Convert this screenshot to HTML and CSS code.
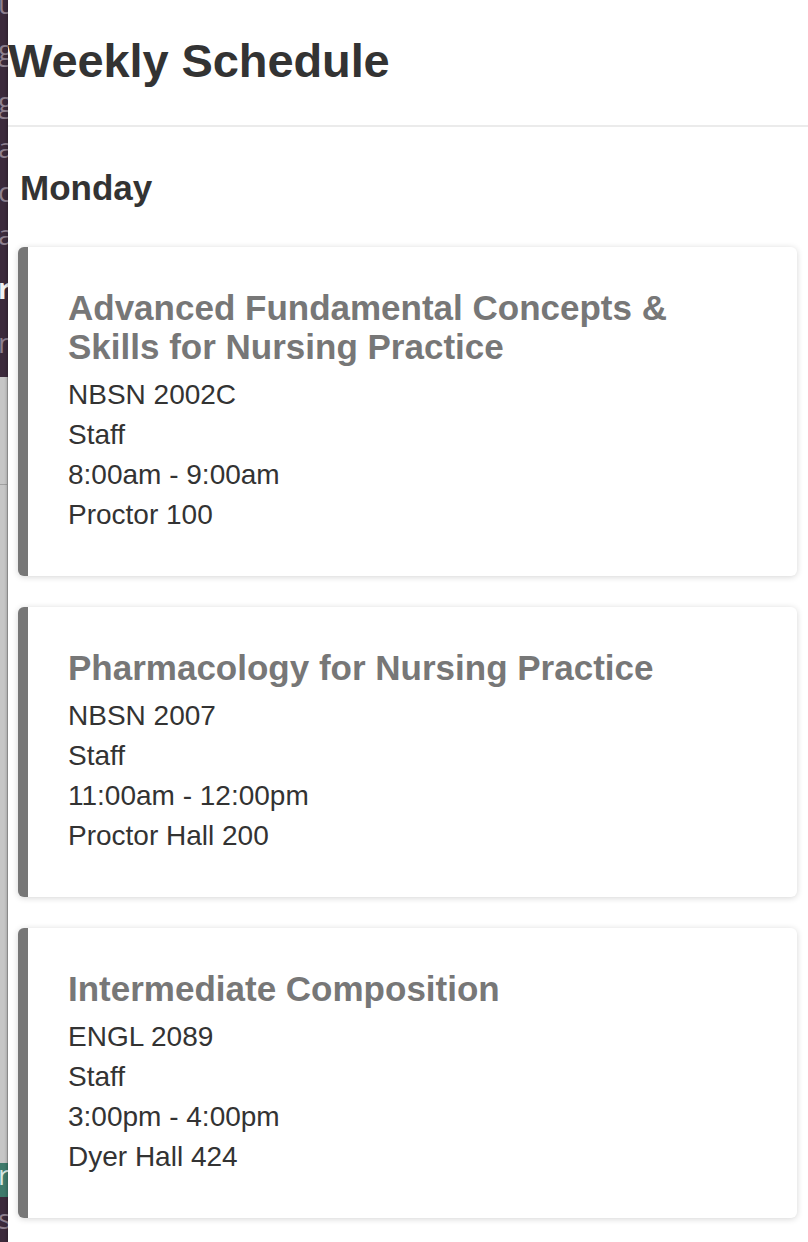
FILE: index.html
```html
<!DOCTYPE html>
<html lang="en">
<head>
<meta charset="utf-8">
<title>Weekly Schedule</title>
<link rel="stylesheet" href="styles.css">
</head>
<body>
<div class="app">
  <aside class="rail">
    <div class="rail-top">
      <span class="ch ch-u">u</span>
      <span class="ch ch-g1">g:</span>
      <span class="ch ch-g2">g</span>
      <span class="ch ch-a1">a</span>
      <span class="ch ch-c">c</span>
      <span class="ch ch-a2">a</span>
      <span class="ch ch-r strong">r</span>
      <span class="ch ch-n">n</span>
    </div>
    <div class="rail-gray">
      <div class="rail-gray-top"></div>
      <div class="rail-gray-bottom"></div>
    </div>
    <div class="rail-teal"><span class="ch">r</span></div>
    <div class="rail-bottom"><span class="ch">s</span></div>
  </aside>

  <main class="page">
    <header class="page-header">
      <h1>Weekly Schedule</h1>
    </header>

    <section class="day">
      <h2 class="day-title">Monday</h2>

      <article class="course">
        <h3 class="course-title">Advanced Fundamental Concepts &amp; Skills for Nursing Practice</h3>
        <div class="course-line">NBSN 2002C</div>
        <div class="course-line">Staff</div>
        <div class="course-line">8:00am - 9:00am</div>
        <div class="course-line">Proctor 100</div>
      </article>

      <article class="course">
        <h3 class="course-title">Pharmacology for Nursing Practice</h3>
        <div class="course-line">NBSN 2007</div>
        <div class="course-line">Staff</div>
        <div class="course-line">11:00am - 12:00pm</div>
        <div class="course-line">Proctor Hall 200</div>
      </article>

      <article class="course">
        <h3 class="course-title">Intermediate Composition</h3>
        <div class="course-line">ENGL 2089</div>
        <div class="course-line">Staff</div>
        <div class="course-line">3:00pm - 4:00pm</div>
        <div class="course-line">Dyer Hall 424</div>
      </article>
    </section>
  </main>
</div>
</body>
</html>
```

FILE: styles.css
```css
html, body {
  margin: 0;
  padding: 0;
  background: #fff;
}

body {
  font-family: "Liberation Sans", Arial, Helvetica, sans-serif;
  color: #333;
}

.app {
  display: flex;
  min-height: 1242px;
}

/* left rail: the page behind this panel */
.rail {
  flex: none;
  width: 8px;
  overflow: hidden;
  background: #3b2a3b;
  display: flex;
  flex-direction: column;
}

.rail-top {
  height: 377px;
  display: flex;
  flex-direction: column;
}

.ch {
  display: block;
  font-family: "Open Sans", "Liberation Sans", sans-serif;
  font-size: 28px;
  line-height: 30px;
  color: #8e808e;
  white-space: nowrap;
  margin-left: -2px;
}

.ch-u { margin-top: -12px; }
.ch-g1 { margin-top: 16px; }
.ch-g2 { margin-top: 22px; }
.ch-a1 { margin-top: 16px; }
.ch-c { margin-top: 14px; }
.ch-a2 { margin-top: 13px; }
.ch-r { margin-top: 24px; }
.ch-n { margin-top: 24px; }

.strong {
  color: #f2f2f2;
  font-weight: 700;
}

.rail-gray {
  height: 786px;
  display: flex;
  flex-direction: column;
  background: #c6c6c6;
  border-right: 1px solid #a3a3a3;
}

.rail-gray-top {
  height: 107px;
  border-bottom: 1px solid #a0a0a0;
}

.rail-gray-bottom {
  flex: 1;
}

.rail-teal {
  height: 34px;
  background: #3e7a6b;
}

.rail-teal .ch {
  color: #d8e6e1;
  margin-top: -4px;
}

.rail-bottom {
  flex: 1;
  background: #3b2a3b;
}

.rail-bottom .ch {
  margin-top: 6px;
}

/* main panel */
.page {
  flex: 1;
  min-width: 0;
  background: #fff;
  box-shadow: -1px 0 3px rgba(0, 0, 0, 0.25);
}

.page-header {
  padding: 36px 0 39px 0;
  border-bottom: 2px solid #ebebeb;
}

.page-header h1 {
  margin: 0;
  font-size: 47px;
  line-height: 50px;
  font-weight: 700;
  color: #333;
  letter-spacing: -0.1px;
}

.day {
  padding: 42px 11px 23px 10px;
}

.day-title {
  margin: 0 0 40px 2px;
  font-size: 35px;
  line-height: 38px;
  font-weight: 700;
  color: #333;
}

.course {
  background: #fff;
  border-left: 10px solid #777;
  border-radius: 6px;
  box-shadow: 0 1px 6px rgba(0, 0, 0, 0.17);
  padding: 41px 40px 41px 40px;
  margin-bottom: 31px;
}

.course:last-child {
  margin-bottom: 0;
}

.course-title {
  margin: 0 0 9px;
  font-size: 35px;
  line-height: 39px;
  font-weight: 700;
  color: #777;
}

.course-line {
  font-size: 28px;
  line-height: 40px;
  color: #333;
}
```
